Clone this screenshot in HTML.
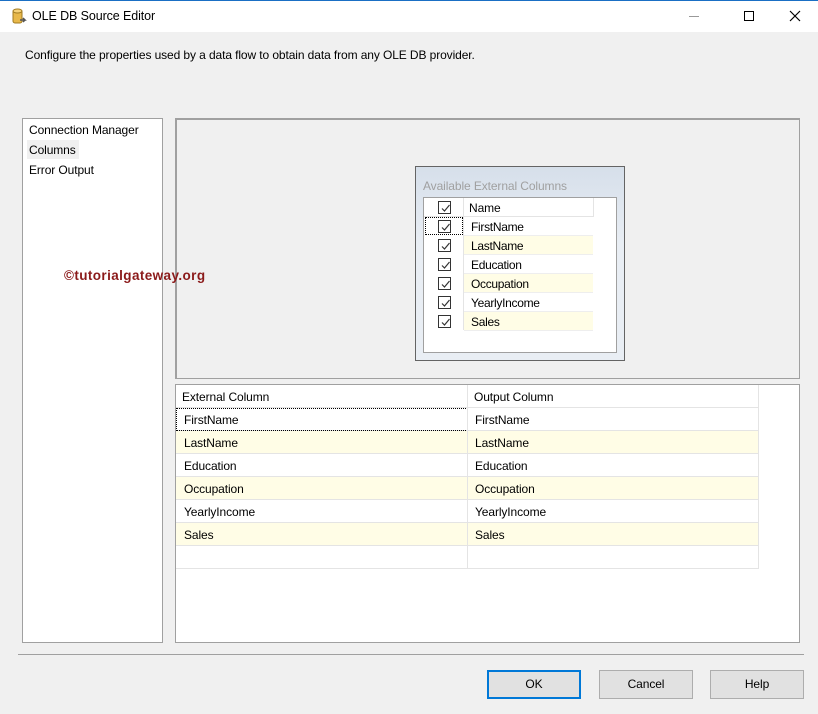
<!DOCTYPE html>
<html><head><meta charset="utf-8"><style>
*{box-sizing:border-box;margin:0;padding:0}
body{width:818px;height:714px;overflow:hidden;background:#f0f0f0;font-family:"Liberation Sans",sans-serif;font-size:12px;color:#000;position:relative;letter-spacing:-0.1px}
.abs{position:absolute}
.title{left:0;top:0;width:818px;height:32px;background:#fff;border-top:1px solid #1a6fc4}
.cb{position:absolute;width:13px;height:13px;border:1px solid #333;background:#fff}
.cb svg{position:absolute;left:1px;top:1px}
</style></head><body>
<div class="abs title">
  <svg class="abs" style="left:11px;top:7px" width="16" height="18" viewBox="0 0 16 18"><rect x="2" y="2" width="9" height="13" rx="2" fill="#e8b84a" stroke="#a07a20"/><ellipse cx="6.5" cy="3" rx="4.5" ry="2" fill="#f6d27a" stroke="#a07a20"/><path d="M9 12h5l-2-2M14 12l-2 2" stroke="#555" stroke-width="1.5" fill="none"/></svg>
  <div class="abs" style="left:32px;top:8px;font-size:12.5px">OLE DB Source Editor</div>
  <div class="abs" style="left:689px;top:15px;width:10px;height:1px;background:#999"></div>
  <div class="abs" style="left:744px;top:10px;width:10px;height:10px;border:1px solid #000"></div>
  <svg class="abs" style="left:789px;top:9px" width="12" height="12"><path d="M1 1L11 11M11 1L1 11" stroke="#000" stroke-width="1.2"/></svg>
</div>
<div class="abs" style="left:25px;top:48px;font-size:12px">Configure the properties used by a data flow to obtain data from any OLE DB provider.</div>

<div class="abs" style="left:22px;top:118px;width:141px;height:525px;background:#fff;border:1px solid #a0a0a0">
  <div class="abs" style="left:6px;top:4px">Connection Manager</div>
  <div class="abs" style="left:4px;top:21px;width:52px;height:19px;background:#f0f0f0"></div>
  <div class="abs" style="left:6px;top:24px">Columns</div>
  <div class="abs" style="left:6px;top:44px">Error Output</div>
</div>

<div class="abs" style="left:175px;top:118px;width:625px;height:261px;border:1px solid #a0a0a0;border-top:2px solid #a0a0a0;border-left:2px solid #a0a0a0;background:#f0f0f0"></div>
<div class="abs" style="left:64px;top:268px;font-weight:bold;font-size:13.5px;color:#8b1a1a;letter-spacing:0.4px;z-index:10">©tutorialgateway.org</div>
<div class="abs" style="left:415px;top:166px;width:210px;height:195px;border:1px solid #646464;background:linear-gradient(#d6dfea,#e9eef4 40%,#e9eef4)">
  <div class="abs" style="left:7px;top:12px;color:#a0a0a0">Available External Columns</div>
  <div class="abs" style="left:7px;top:30px;width:194px;height:156px;background:#fff;border:1px solid #a0a0a0;overflow:hidden">
    <div class="abs" style="left:39px;top:0;width:1px;height:132px;background:#e4e4e4"></div>
    <div class="abs" style="left:0;top:18px;width:169px;height:1px;background:#e4e4e4"></div>
    <div class="abs" style="left:169px;top:0;width:1px;height:19px;background:#e4e4e4"></div>
    <div class="abs" style="left:45px;top:3px">Name</div>
    <div id="rows"></div>
  </div>
</div>

<div class="abs" style="left:175px;top:384px;width:625px;height:259px;background:#fff;border:1px solid #a0a0a0;overflow:hidden" id="grid">
  <div class="abs" style="left:0;top:0;width:583px;height:23px;border-bottom:1px solid #e4e4e4"></div>
  <div class="abs" style="left:6px;top:5px">External Column</div>
  <div class="abs" style="left:298px;top:5px">Output Column</div>
</div>

<div class="abs" style="left:18px;top:654px;width:786px;height:1px;background:#a0a0a0"></div>
<div class="abs" style="left:487px;top:670px;width:94px;height:29px;border:2px solid #0078d7;background:#e1e1e1;text-align:center;line-height:25px">OK</div>
<div class="abs" style="left:599px;top:670px;width:94px;height:29px;border:1px solid #adadad;background:#e1e1e1;text-align:center;line-height:27px">Cancel</div>
<div class="abs" style="left:710px;top:670px;width:94px;height:29px;border:1px solid #adadad;background:#e1e1e1;text-align:center;line-height:27px">Help</div>

<script>
var names=["FirstName","LastName","Education","Occupation","YearlyIncome","Sales"];
var chk='<svg width="11" height="11"><path d="M2 5.5L4.5 8L9.5 2" stroke="#333" stroke-width="1.2" fill="none"/></svg>';
var r='<div class="cb" style="left:14px;top:3px">'+chk+'</div>';
names.forEach(function(n,i){
  var t=19+i*19;
  r+='<div class="abs" style="left:40px;top:'+t+'px;width:129px;height:19px;background:'+(i%2?'#fffde6':'#fff')+';border-bottom:1px solid #eee"></div>';
  if(i==0) r+='<div class="abs" style="left:1px;top:'+(t)+'px;width:38px;height:18px;border:1px dotted #000"></div>';
  r+='<div class="cb" style="left:14px;top:'+(t+3)+'px">'+chk+'</div>';
  r+='<div class="abs" style="left:47px;top:'+(t+3)+'px;letter-spacing:-0.3px">'+n+'</div>';
});
document.getElementById('rows').innerHTML=r;
var g='';
names.concat([""]).forEach(function(n,i){
  var t=23+i*23;
  g+='<div class="abs" style="left:0;top:'+t+'px;width:583px;height:23px;background:'+(i%2?'#fffde6':'#fff')+';border-bottom:1px solid #e4e4e4"></div>';
  if(i==0) g+='<div class="abs" style="left:0;top:'+t+'px;width:292px;height:23px;border:1px dotted #000"></div>';
  g+='<div class="abs" style="left:8px;top:'+(t+5)+'px">'+n+'</div><div class="abs" style="left:299px;top:'+(t+5)+'px">'+n+'</div>';
});
g+='<div class="abs" style="left:291px;top:0;width:1px;height:184px;background:#e4e4e4"></div><div class="abs" style="left:582px;top:0;width:1px;height:184px;background:#e4e4e4"></div>';
document.getElementById('grid').insertAdjacentHTML('beforeend',g);
</script>
</body></html>
